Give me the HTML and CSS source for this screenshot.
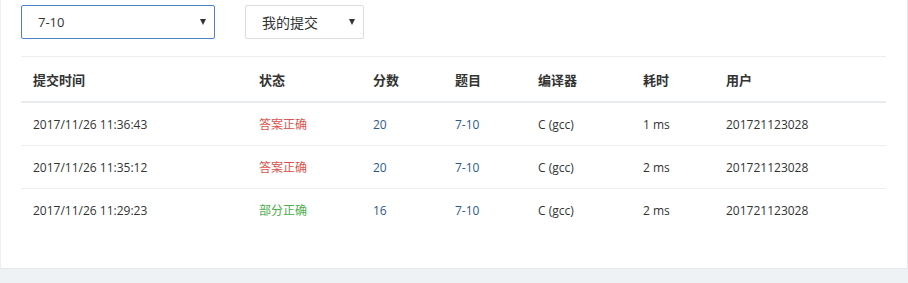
FILE: index.html
```html
<!DOCTYPE html>
<html lang="zh">
<head>
  <meta charset="UTF-8">
  <title>提交列表</title>
  <link rel="stylesheet" href="styles.css">
</head>
<body>
  <div class="panel">
    <div class="filters">
      <div class="picker picker-active">
        <span>7-10</span>
        <i class="caret"></i>
      </div>
      <div class="picker picker-small">
        <span>我的提交</span>
        <i class="caret"></i>
      </div>
    </div>

    <table class="submissions">
      <thead>
        <tr>
          <th class="c-time">提交时间</th>
          <th class="c-status">状态</th>
          <th class="c-score">分数</th>
          <th class="c-problem">题目</th>
          <th class="c-compiler">编译器</th>
          <th class="c-cost">耗时</th>
          <th>用户</th>
        </tr>
      </thead>
      <tbody>
        <tr>
          <td>2017/11/26 11:36:43</td>
          <td class="ok">答案正确</td>
          <td class="link">20</td>
          <td class="link">7-10</td>
          <td>C (gcc)</td>
          <td>1 ms</td>
          <td>201721123028</td>
        </tr>
        <tr>
          <td>2017/11/26 11:35:12</td>
          <td class="ok">答案正确</td>
          <td class="link">20</td>
          <td class="link">7-10</td>
          <td>C (gcc)</td>
          <td>2 ms</td>
          <td>201721123028</td>
        </tr>
        <tr>
          <td>2017/11/26 11:29:23</td>
          <td class="partial">部分正确</td>
          <td class="link">16</td>
          <td class="link">7-10</td>
          <td>C (gcc)</td>
          <td>2 ms</td>
          <td>201721123028</td>
        </tr>
      </tbody>
    </table>
  </div>
</body>
</html>
```

FILE: styles.css
```css
body {
  margin: 0;
  background: #eff2f5;
  font-family: "Open Sans", "Noto Sans CJK SC", sans-serif;
  font-size: 12px;
  color: #333;
}
.panel {
  height: 263px;
  background: #fff;
  border-left: 1px solid #edf0f3;
  border-right: 1px solid #e3e7ec;
  border-bottom: 1px solid #e3e6ea;
  padding: 5px 21px 0 20px;
  box-sizing: border-box;
  height: 269px;
}
.filters {
  display: flex;
  gap: 30px;
  margin-bottom: 17px;
}
.picker {
  display: flex;
  align-items: center;
  justify-content: space-between;
  height: 34px;
  box-sizing: border-box;
  border: 1px solid #dcdcdc;
  border-radius: 2px;
  padding: 0 8px 0 16px;
  width: 194px;
  font-size: 13px;
}
.picker-active {
  border-color: #4a86c5;
}
.picker-small {
  width: 119px;
  font-size: 14px;
}
.caret {
  width: 0;
  height: 0;
  border-left: 3px solid transparent;
  border-right: 3px solid transparent;
  border-top: 6px solid #333;
}
.submissions {
  width: 100%;
  border-collapse: collapse;
  border-top: 1px solid #eceef1;
}
.submissions th {
  text-align: left;
  font-weight: bold;
  font-size: 13px;
  height: 44px;
  padding: 0 12px;
  border-bottom: 2px solid #e9ecef;
}
.submissions td {
  height: 42px;
  padding: 0 12px;
  border-bottom: 1px solid #eceef1;
}
.submissions tbody tr:last-child td {
  border-bottom: none;
}
.c-time { width: 202px; }
.c-status { width: 90px; }
.c-score { width: 58px; }
.c-problem { width: 59px; }
.c-compiler { width: 81px; }
.c-cost { width: 59px; }
.ok { color: #d9534f; }
.partial { color: #4cae4c; }
.link { color: #2d5a88; }
```
